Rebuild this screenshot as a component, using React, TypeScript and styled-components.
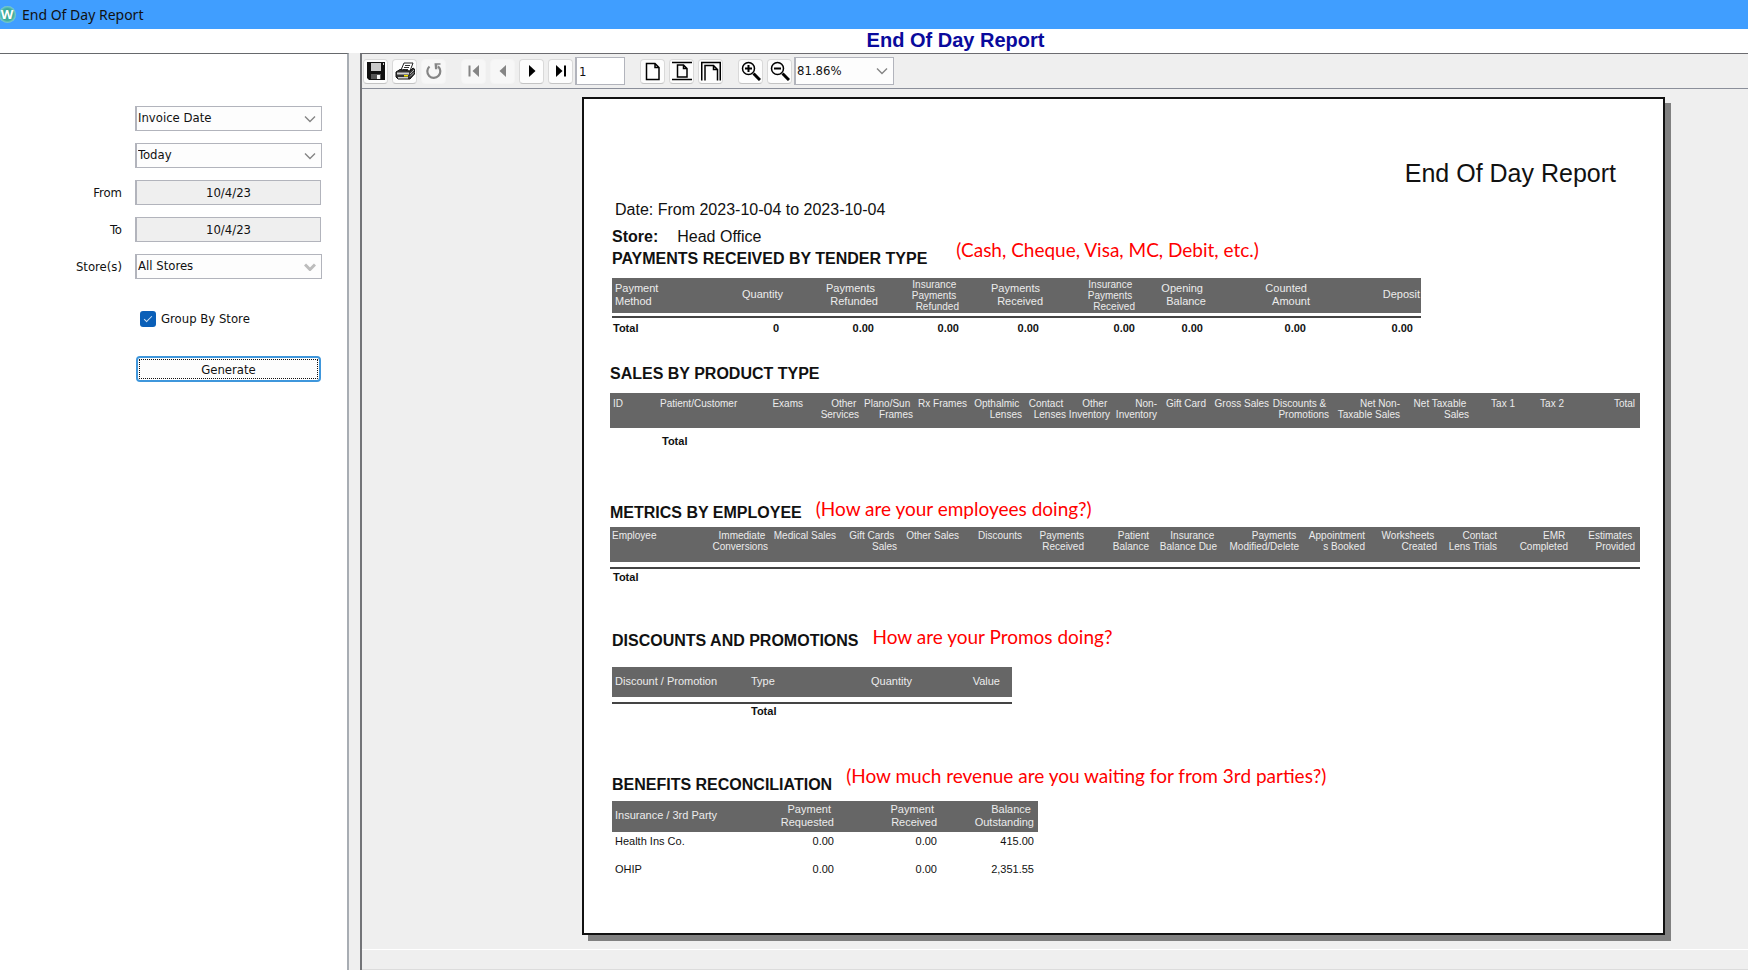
import React from "react";
import styled, { createGlobalStyle } from "styled-components";

const uiFont = '"DejaVu Sans Condensed", "DejaVu Sans", Tahoma, sans-serif';
const reportFont = '"Liberation Sans", Arial, sans-serif';

const GlobalStyle = createGlobalStyle`
  *, *::before, *::after { box-sizing: border-box; }
  body { margin: 0; background: #fff; color: #111; font: 13px ${uiFont}; }
  h1, h2, h3, p { margin: 0; }
  button, input, select { font: inherit; color: inherit; margin: 0; }
`;

/* ---------- window frame ---------- */

const Window = styled.div`
  display: flex;
  flex-direction: column;
  min-height: 100vh;
`;

const TitleBar = styled.header`
  display: flex;
  align-items: center;
  gap: 6px;
  height: 29px;
  background: #409eff;
  font: 14px "Noto Sans", "Segoe UI", sans-serif;
  overflow: hidden;
`;

const Logo = styled.svg`
  width: 17px;
  height: 17px;
  margin-left: -1px;
`;

const Heading = styled.h1`
  height: 24px;
  padding-left: 163px;
  background: #fff;
  color: #0a0a9c;
  font: bold 20px/22px ${reportFont};
  text-align: center;
`;

const Workspace = styled.div`
  display: flex;
  flex: 1;
  background: #efefef;
`;

/* ---------- filter panel ---------- */

const FilterPanel = styled.form`
  width: 349px;
  flex: none;
  padding-top: 52px;
  background: #fff;
  border-top: 1px solid #66696c;
  border-right: 2px solid #a8adb3;
`;

const FilterGrid = styled.div`
  display: grid;
  grid-template-columns: 122px 187px;
  grid-auto-rows: 25px;
  gap: 12px 13px;
  align-items: center;
`;

const FieldLabel = styled.label`
  grid-column: 1;
  text-align: right;
`;

const SelectBox = styled.div`
  display: grid;
  grid-column: 2;
  height: 25px;
`;

const fieldBorder = `
  border: 1px solid #b2b4bc;
  border-left-width: 2px;
  border-radius: 0;
`;

const Select = styled.select`
  grid-area: 1 / 1;
  width: 100%;
  height: 100%;
  padding: 0 20px 2px 1px;
  appearance: none;
  background: #fdfdfd;
  ${fieldBorder}
`;

const Chevron = styled.svg<{ $strong?: boolean }>`
  grid-area: 1 / 1;
  place-self: center end;
  width: 12px;
  height: 8px;
  margin-right: 6px;
  fill: none;
  stroke: ${(p) => (p.$strong ? "#bcbcbc" : "#858585")};
  stroke-width: ${(p) => (p.$strong ? 3 : 1.4)};
  pointer-events: none;
`;

const DateField = styled.input`
  grid-column: 2;
  width: 186px;
  height: 25px;
  padding: 0 0 1px;
  background: #efefef;
  text-align: center;
  ${fieldBorder}
`;

const CheckRow = styled.label`
  display: flex;
  align-items: center;
  gap: 5px;
  height: 17px;
  margin: 31px 0 0 140px;
`;

const CheckBox = styled.input`
  display: grid;
  place-content: center;
  width: 16px;
  height: 16px;
  appearance: none;
  border-radius: 3px;
  background: #0a5fb8;
  &:checked::before {
    content: "";
    width: 8px;
    height: 4px;
    margin-bottom: 2px;
    border: solid #cfe2f5;
    border-width: 0 0 1px 1px;
    transform: rotate(-45deg);
  }
`;

const GenerateButton = styled.button`
  display: block;
  width: 185px;
  height: 26px;
  margin: 29px 0 0 136px;
  padding: 0;
  background: #fdfdfd;
  border: 2px solid #3f97dc;
  border-radius: 4px;
  outline: 1px dotted #111;
  outline-offset: -4px;
`;

/* ---------- report viewer ---------- */

const Viewer = styled.main`
  display: flex;
  flex-direction: column;
  flex: 1;
  min-width: 0;
  margin-left: 11px;
  border-top: 1px solid #6c6c70;
  border-left: 2px solid #737478;
`;

const Toolbar = styled.div`
  display: flex;
  align-items: center;
  height: 35px;
  padding-left: 1px;
  border-bottom: 1px solid #8b8f9a;
`;

const ToolGroup = styled.div`
  display: flex;
  gap: 4px;
  & ~ & { margin-left: 15px; }
`;

const ToolButton = styled.button`
  display: grid;
  place-items: center;
  width: 25px;
  height: 25px;
  padding: 0;
  color: #000;
  background: #fdfdfd;
  border: 1px solid #d9d9d9;
  border-bottom-color: #c4c4c4;
  border-radius: 4px;
  &:disabled {
    color: #858585;
    background: #f7f7f7;
    border-color: #f4f4f4;
  }
`;

const Icon = styled.svg`
  width: 20px;
  height: 20px;
  fill: none;
  stroke: currentColor;
`;

const PageField = styled.input`
  width: 50px;
  height: 28px;
  margin-left: 2px;
  padding: 0 2px;
  background: #fff;
  ${fieldBorder}
`;

const ZoomBox = styled.div`
  display: grid;
  width: 100px;
  height: 28px;
  margin-left: 2px;
`;

const Canvas = styled.div`
  display: flex;
  flex: 1;
  align-items: flex-start;
  padding: 8px 83px 14px 220px;
`;

const StatusBar = styled.footer`
  height: 21px;
  border-top: 1px solid #fff;
  border-bottom: 1px solid #dcdcdc;
`;

const Paper = styled.article`
  flex: 1;
  min-width: 1080px;
  padding: 59px 23px 45px 26px;
  background: #fff;
  border: 2px solid #111;
  box-shadow: 6px 6px 0 #808080;
  font: 16px/20px ${reportFont};
`;

const ReportTitle = styled.h2`
  padding-right: 24px;
  font-size: 25px;
  font-weight: normal;
  line-height: 30px;
  text-align: right;
`;

const DateLine = styled.p`
  margin-top: 12px;
  padding-left: 5px;
`;

const StoreLine = styled.p`
  display: flex;
  gap: 19px;
  margin-top: 7px;
  padding-left: 2px;
`;

const Section = styled.section<{ $top: number; $inset?: boolean }>`
  padding-top: ${(p) => p.$top}px;
  padding-left: ${(p) => (p.$inset ? 2 : 0)}px;
`;

const SectionHead = styled.div<{ $gap?: number }>`
  display: flex;
  align-items: center;
  height: 20px;
  gap: ${(p) => p.$gap ?? 14}px;
`;

const SectionTitle = styled.h3`
  font-size: 16px;
  line-height: 20px;
`;

const Note = styled.span<{ $raised?: boolean }>`
  padding-bottom: ${(p) => (p.$raised ? 18 : 8)}px;
  color: #f00;
  font: 19px/20px Lato, Calibri, sans-serif;
`;

const Table = styled.table<{ $top: number }>`
  margin-top: ${(p) => p.$top}px;
  table-layout: fixed;
  border-collapse: separate;
  border-spacing: 0;
  white-space: pre;
`;

const HeadCell = styled.th<{
  $height: number;
  $gap: number;
  $small: boolean;
  $left?: number;
  $right?: number;
  $top?: number;
}>`
  height: ${(p) => p.$height + p.$gap}px;
  padding: ${(p) => p.$top ?? 0}px ${(p) => p.$right ?? 0}px ${(p) => (p.$small ? 0 : 2)}px
    ${(p) => p.$left ?? 0}px;
  border-bottom: ${(p) => p.$gap}px solid #fff;
  background: #666;
  color: #ececec;
  font-size: ${(p) => (p.$small ? 10 : 11)}px;
  line-height: ${(p) => (p.$small ? 11 : 13)}px;
  font-weight: normal;
  text-align: ${(p) => (p.$left === undefined ? "right" : "left")};
  vertical-align: ${(p) => (p.$top === undefined ? "middle" : "top")};
`;

const BodyCell = styled.td<{
  $height: number;
  $total: boolean;
  $ruled: boolean;
  $left?: number;
  $right?: number;
}>`
  height: ${(p) => p.$height}px;
  padding: ${(p) => (p.$total ? 0 : 3)}px ${(p) => p.$right ?? 0}px 0 ${(p) => p.$left ?? 0}px;
  border-top: ${(p) => (p.$ruled ? "2px solid #444" : "0")};
  font-size: 11px;
  line-height: 13px;
  font-weight: ${(p) => (p.$total ? "bold" : "normal")};
  text-align: ${(p) => (p.$left === undefined ? "right" : "left")};
  vertical-align: ${(p) => (p.$total ? "middle" : "top")};
`;

type Column = {
  label: string;
  width: number;
  left?: number;
  right?: number;
  bodyLeft?: number;
  bodyRight?: number;
  small?: boolean;
};

type ReportTableProps = {
  columns: Column[];
  rows: string[][];
  top: number;
  headHeight: number;
  headTop?: number;
  gap?: number;
  rowHeight: number;
  small?: boolean;
  total?: boolean;
};

function ReportTable(props: ReportTableProps) {
  const { columns, rows, top, headHeight, headTop, gap = 0, rowHeight, small = false, total = false } = props;
  return (
    <Table $top={top} width={columns.reduce((sum, c) => sum + c.width, 0)}>
      <colgroup>
        {columns.map((c, i) => (
          <col key={i} width={c.width} />
        ))}
      </colgroup>
      <thead>
        <tr>
          {columns.map((c, i) => (
            <HeadCell
              key={i}
              scope="col"
              $height={headHeight}
              $gap={gap}
              $small={small || !!c.small}
              $left={c.left}
              $right={c.right}
              $top={headTop}
            >
              {c.label}
            </HeadCell>
          ))}
        </tr>
      </thead>
      <tbody>
        {rows.map((row) => (
          <tr key={row.join()}>
            {columns.map((c, i) => (
              <BodyCell
                key={i}
                $height={rowHeight}
                $total={total}
                $ruled={gap > 0}
                $left={c.bodyLeft ?? c.left}
                $right={c.bodyRight ?? c.right}
              >
                {row[i] ?? ""}
              </BodyCell>
            ))}
          </tr>
        ))}
      </tbody>
    </Table>
  );
}

/* ---------- report data ---------- */

const tenderColumns: Column[] = [
  { label: "Payment\nMethod", width: 78, left: 3, bodyLeft: 1 },
  { label: "Quantity", width: 93, bodyRight: 4 },
  { label: "Payments \nRefunded", width: 95, bodyRight: 4 },
  { label: "Insurance \nPayments \nRefunded", width: 81, small: true },
  { label: "Payments \nReceived", width: 84, bodyRight: 4 },
  { label: "Insurance \nPayments \nReceived", width: 92, small: true },
  { label: "Opening \nBalance", width: 71, bodyRight: 3 },
  { label: "Counted \nAmount", width: 104, bodyRight: 4 },
  { label: "Deposit", width: 111, right: 1, bodyRight: 8 },
];

const salesColumns: Column[] = [
  { label: "ID", width: 48, left: 3 },
  { label: "Patient/Customer", width: 90, left: 2, bodyLeft: 4 },
  { label: "Exams", width: 55 },
  { label: "Other \nServices", width: 56 },
  { label: "Plano/Sun \nFrames", width: 54 },
  { label: "Rx Frames", width: 54 },
  { label: "Opthalmic \nLenses", width: 55 },
  { label: "Contact \nLenses", width: 44 },
  { label: "Other \nInventory", width: 44 },
  { label: "Non-\nInventory", width: 47 },
  { label: "Gift Card", width: 49 },
  { label: "Gross Sales", width: 63 },
  { label: "Discounts & \nPromotions", width: 60 },
  { label: "Net Non-\nTaxable Sales", width: 71 },
  { label: "Net Taxable \nSales", width: 69 },
  { label: "Tax 1", width: 46 },
  { label: "Tax 2", width: 49 },
  { label: "Total", width: 76, right: 5 },
];

const employeeColumns: Column[] = [
  { label: "Employee", width: 98, left: 2, bodyLeft: 3 },
  { label: "Immediate \nConversions", width: 60 },
  { label: "Medical Sales", width: 68 },
  { label: "Gift Cards \nSales", width: 61 },
  { label: "Other Sales", width: 62 },
  { label: "Discounts", width: 63 },
  { label: "Payments\nReceived", width: 62 },
  { label: "Patient\nBalance", width: 65 },
  { label: "Insurance \nBalance Due", width: 68 },
  { label: "Payments \nModified/Delete", width: 82 },
  { label: "Appointment\ns Booked", width: 66 },
  { label: "Worksheets \nCreated", width: 72 },
  { label: "Contact\nLens Trials", width: 60 },
  { label: "EMR \nCompleted", width: 71 },
  { label: "Estimates \nProvided", width: 72, right: 5 },
];

const promotionColumns: Column[] = [
  { label: "Discount / Promotion", width: 138, left: 3 },
  { label: "Type", width: 70, left: 1 },
  { label: "Quantity", width: 92 },
  { label: "Value", width: 100, right: 12 },
];

const benefitColumns: Column[] = [
  { label: "Insurance / 3rd Party", width: 122, left: 3 },
  { label: "Payment \nRequested", width: 100 },
  { label: "Payment \nReceived", width: 103 },
  { label: "Balance \nOutstanding", width: 101, right: 4 },
];

/* ---------- icons ---------- */

const SaveIcon = () => (
  <Icon viewBox="0 0 20 20">
    <path d="M1 1h18v18H3l-2-2z" fill="#111" stroke="none" />
    <path d="M5 2h10v8H5z" fill="#c9c9c9" stroke="none" />
    <path d="M5 13h10v5H5z" fill="#555" stroke="none" />
    <path d="M11 14h3v4h-3z" fill="#f4f4f4" stroke="none" />
    <path d="M17 2h1v2h-1z" fill="#ccc" stroke="none" />
  </Icon>
);

const PrintIcon = () => (
  <Icon viewBox="0 0 20 20">
    <path d="M6 9 9 2h9l-3 8" fill="#fff" stroke="#222" />
    <path d="M10 4.500h5M9 6.500h5M8 8.500h5" stroke="#333" />
    <path d="M1 11 5 8.500l10 1.500 3-3 1.500 1v5L15 18H3l-2-2z" fill="#333" stroke="#111" />
    <path d="M2 11.500h12v2H2zM3 16h10v1.500H3z" fill="#d0d0d0" stroke="none" />
    <path d="M15 13l4-4M15 15.500l4-4" stroke="#aaa" />
    <path d="M9 14h4v1.500H9z" fill="#f4e400" stroke="none" />
  </Icon>
);

const ReloadIcon = () => (
  <Icon viewBox="0 0 20 20">
    <path d="M5.500 5.500A6.500 6.500 0 1 0 14 5.400" strokeWidth="2.200" />
    <path d="M10.500 2.200h6v1.600h-3.200v4.400h-2.300z" fill="currentColor" stroke="none" />
  </Icon>
);

const ArrowIcon = ({ back, bar }: { back?: boolean; bar?: boolean }) => (
  <Icon viewBox="0 0 20 20">
    <path
      d={back ? (bar ? "M15 4v12L8.500 10z" : "M13 4v12L6.500 10z") : bar ? "M5 4v12L11.500 10z" : "M7 4v12L13.500 10z"}
      fill="currentColor"
      stroke="none"
    />
    {bar && <path d={back ? "M5.500 4.500v11" : "M14 4.500v11"} strokeWidth="2" />}
  </Icon>
);

const ActualSizeIcon = () => (
  <Icon viewBox="0 0 20 20" strokeWidth="1.500">
    <path d="M3.500 2.500h8.500l4 4v12H3.500zM12 2.500v4h4" />
  </Icon>
);

const FitPageIcon = () => (
  <Icon viewBox="0 0 20 20" strokeWidth="1.500">
    <path d="M0 1.500h20M0 18.500h20M5.500 4h6l3.500 3.500V16H5.500zM11.500 4v3.500H15" />
  </Icon>
);

const FitWidthIcon = () => (
  <Icon viewBox="0 0 20 20" strokeWidth="1.500">
    <path d="M.750 19.500V1.500h18.500v18M4 19.500V4.500h8.500l4 4v11M12.500 4.500v4h4" />
  </Icon>
);

const ZoomIcon = ({ plus }: { plus?: boolean }) => (
  <Icon viewBox="0 0 20 20">
    <circle cx="7.500" cy="7.500" r="6" strokeWidth="1.500" />
    <path d="M12.500 12.500l6.500 6.500" strokeWidth="3" />
    <path d={plus ? "M4 7.500h7M7.500 4v7" : "M4 7.500h7"} strokeWidth="2" />
  </Icon>
);

const DropMark = ({ strong }: { strong?: boolean }) => (
  <Chevron $strong={strong} viewBox="0 0 12 8" aria-hidden="true">
    <path d="M1 1.500 6 6.500 11 1.500" />
  </Chevron>
);

/* ---------- page ---------- */

export default function App() {
  return (
    <Window>
      <GlobalStyle />
      <TitleBar>
        <Logo viewBox="0 0 17 17" aria-hidden="true">
          <defs>
            <radialGradient id="logoFill">
              <stop offset="0" stopColor="#2a9d8c" />
              <stop offset="0.700" stopColor="#3fae9f" />
              <stop offset="1" stopColor="#7fcdd0" />
            </radialGradient>
          </defs>
          <circle cx="8.500" cy="8.500" r="8.500" fill="url(#logoFill)" />
          <text x="8" y="13" fill="#fff" fontSize="13" fontWeight="bold" textAnchor="middle">
            W
          </text>
        </Logo>
        <span>End Of Day Report</span>
      </TitleBar>
      <Heading>End Of Day Report</Heading>
      <Workspace>
        <FilterPanel onSubmit={(e) => e.preventDefault()}>
          <FilterGrid>
            <SelectBox>
              <Select aria-label="Date type">
                <option>Invoice Date</option>
              </Select>
              <DropMark />
            </SelectBox>
            <SelectBox>
              <Select aria-label="Period">
                <option>Today</option>
              </Select>
              <DropMark />
            </SelectBox>
            <FieldLabel htmlFor="from">From</FieldLabel>
            <DateField id="from" readOnly value="10/4/23" />
            <FieldLabel htmlFor="to">To</FieldLabel>
            <DateField id="to" readOnly value="10/4/23" />
            <FieldLabel htmlFor="stores">Store(s)</FieldLabel>
            <SelectBox>
              <Select id="stores">
                <option>All Stores</option>
              </Select>
              <DropMark strong />
            </SelectBox>
          </FilterGrid>
          <CheckRow>
            <CheckBox type="checkbox" defaultChecked />
            Group By Store
          </CheckRow>
          <GenerateButton type="submit">Generate</GenerateButton>
        </FilterPanel>

        <Viewer>
          <Toolbar>
            <ToolGroup>
              <ToolButton aria-label="Save"><SaveIcon /></ToolButton>
              <ToolButton aria-label="Print"><PrintIcon /></ToolButton>
              <ToolButton aria-label="Reload" disabled><ReloadIcon /></ToolButton>
            </ToolGroup>
            <ToolGroup>
              <ToolButton aria-label="First page" disabled><ArrowIcon back bar /></ToolButton>
              <ToolButton aria-label="Previous page" disabled><ArrowIcon back /></ToolButton>
              <ToolButton aria-label="Next page"><ArrowIcon /></ToolButton>
              <ToolButton aria-label="Last page"><ArrowIcon bar /></ToolButton>
            </ToolGroup>
            <PageField aria-label="Page" defaultValue="1" />
            <ToolGroup>
              <ToolButton aria-label="Actual size"><ActualSizeIcon /></ToolButton>
              <ToolButton aria-label="Fit page"><FitPageIcon /></ToolButton>
              <ToolButton aria-label="Fit width"><FitWidthIcon /></ToolButton>
            </ToolGroup>
            <ToolGroup>
              <ToolButton aria-label="Zoom in"><ZoomIcon plus /></ToolButton>
              <ToolButton aria-label="Zoom out"><ZoomIcon /></ToolButton>
            </ToolGroup>
            <ZoomBox>
              <Select aria-label="Zoom">
                <option>81.86%</option>
              </Select>
              <DropMark />
            </ZoomBox>
          </Toolbar>

          <Canvas>
            <Paper>
              <ReportTitle>End Of Day Report</ReportTitle>
              <DateLine>Date: From 2023-10-04 to 2023-10-04</DateLine>
              <StoreLine>
                <strong>Store:</strong>
                <span>Head Office</span>
              </StoreLine>

              <Section $top={2} $inset>
                <SectionHead $gap={29}>
                  <SectionTitle>PAYMENTS RECEIVED BY TENDER TYPE</SectionTitle>
                  <Note $raised>(Cash, Cheque, Visa, MC, Debit, etc.)</Note>
                </SectionHead>
                <ReportTable
                  columns={tenderColumns}
                  rows={[["Total", "0", "0.00", "0.00", "0.00", "0.00", "0.00", "0.00", "0.00"]]}
                  top={9}
                  headHeight={35}
                  gap={3}
                  rowHeight={22}
                  total
                />
              </Section>

              <Section $top={26}>
                <SectionHead>
                  <SectionTitle>SALES BY PRODUCT TYPE</SectionTitle>
                </SectionHead>
                <ReportTable
                  columns={salesColumns}
                  rows={[["", "Total"]]}
                  top={9}
                  headHeight={35}
                  headTop={5}
                  rowHeight={26}
                  small
                  total
                />
              </Section>

              <Section $top={49}>
                <SectionHead>
                  <SectionTitle>METRICS BY EMPLOYEE</SectionTitle>
                  <Note>(How are your employees doing?)</Note>
                </SectionHead>
                <ReportTable
                  columns={employeeColumns}
                  rows={[["Total"]]}
                  top={4}
                  headHeight={35}
                  headTop={3}
                  gap={5}
                  rowHeight={18}
                  small
                  total
                />
              </Section>

              <Section $top={46} $inset>
                <SectionHead>
                  <SectionTitle>DISCOUNTS AND PROMOTIONS</SectionTitle>
                  <Note>How are your Promos doing?</Note>
                </SectionHead>
                <ReportTable
                  columns={promotionColumns}
                  rows={[["", "Total"]]}
                  top={16}
                  headHeight={30}
                  gap={5}
                  rowHeight={16}
                  total
                />
              </Section>

              <Section $top={57} $inset>
                <SectionHead>
                  <SectionTitle>BENEFITS RECONCILIATION</SectionTitle>
                  <Note $raised>(How much revenue are you waiting for from 3rd parties?)</Note>
                </SectionHead>
                <ReportTable
                  columns={benefitColumns}
                  rows={[
                    ["Health Ins Co.", "0.00", "0.00", "415.00"],
                    ["OHIP", "0.00", "0.00", "2,351.55"],
                  ]}
                  top={6}
                  headHeight={31}
                  rowHeight={28}
                />
              </Section>
            </Paper>
          </Canvas>
          <StatusBar />
        </Viewer>
      </Workspace>
    </Window>
  );
}
